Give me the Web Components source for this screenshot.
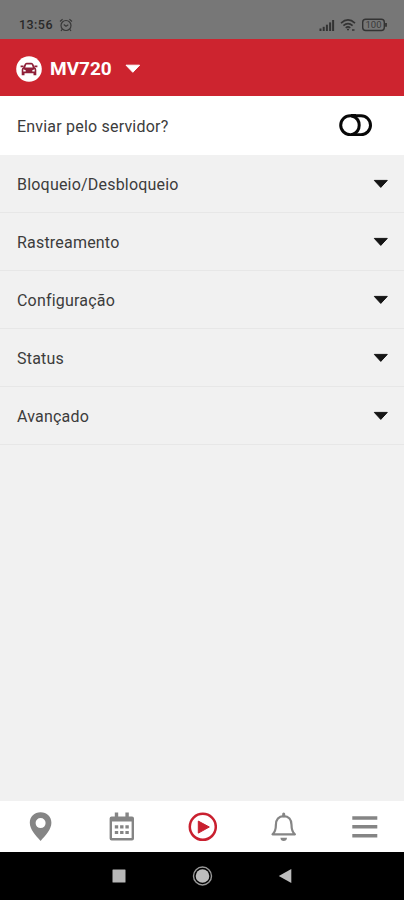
<!DOCTYPE html>
<html lang="pt-BR">
<head>
<meta charset="UTF-8">
<meta name="viewport" content="width=device-width, initial-scale=1.0">
<title>MV720</title>
<style>
    body {
        margin: 0;
        font-family: Roboto, "Liberation Sans", sans-serif;
    }
</style>
</head>
<body>
<command-screen></command-screen>
<script>
class StatusBar extends HTMLElement {
    constructor() {
        super();
        this.attachShadow({ mode: 'open' });
        this.render();
    }

    render() {
        this.shadowRoot.innerHTML = `
            <style>
                :host {
                    display: flex;
                    align-items: center;
                    box-sizing: border-box;
                    height: 39px;
                    padding: 10px 16px 0 19px;
                    background: #777;
                    color: #292929;
                }
                .time {
                    font-size: 12.5px;
                    font-weight: 500;
                    letter-spacing: 0.45px;
                    width: 40px;
                }
                .system {
                    margin-left: auto;
                }
                svg {
                    display: block;
                }
            </style>
            <span class="time">13:56</span>
            <svg width="14" height="14" viewBox="0 0 14 14" fill="none" stroke="#383838" stroke-width="1.2">
                <circle cx="7" cy="7.5" r="5"/>
                <path d="M1 3.5 3.6 1.2M13 3.5 10.4 1.2M3.4 11.2 2 13M10.6 11.2 12 13M4.8 6.5 7 8.2 9.3 6.8"/>
            </svg>
            <svg class="system" width="69" height="14" viewBox="0 0 69 14">
                <g fill="#333">
                    <rect x="0.5" y="10.5" width="2" height="2.5"/>
                    <rect x="3.7" y="8.8" width="2" height="4.2"/>
                    <rect x="6.9" y="6.7" width="2" height="6.3"/>
                    <rect x="10.1" y="4.4" width="2" height="8.6"/>
                    <rect x="13.1" y="2" width="2" height="11"/>
                </g>
                <g fill="none" stroke="#333" stroke-width="1.6">
                    <path d="M22 5.1Q29 -1.3 36 5.1M24.4 7.6Q29 3.5 33.6 7.6M26.7 9.8Q29 8 31.3 9.8"/>
                    <path d="M28 11.5h2M33 12h2.5" stroke-width="1.7"/>
                    <rect x="43.7" y="1.3" width="21.6" height="11.2" rx="3" stroke-width="1.4"/>
                    <path d="M67 5.1v3.6" stroke-width="1.8"/>
                </g>
                <text x="54.5" y="10.4" text-anchor="middle" font-size="9.5" fill="#3a3a3a">100</text>
            </svg>
        `;
    }
}

class DeviceHeader extends HTMLElement {
    constructor() {
        super();
        this.attachShadow({ mode: 'open' });
        this.render();
    }

    render() {
        this.shadowRoot.innerHTML = `
            <style>
                :host {
                    display: flex;
                    align-items: center;
                    box-sizing: border-box;
                    height: 57px;
                    padding: 2px 16px 0;
                    background: #cd242f;
                    color: #fff;
                    font-size: 19px;
                    font-weight: 700;
                }
                .name {
                    margin: 0 12px 0 8px;
                }
            </style>
            <svg width="26" height="26" viewBox="0 0 26 26">
                <circle cx="13" cy="13" r="12.8" fill="#fff"/>
                <path d="M5.7 19.3v-5.6q0-1.5 1.6-2.4l1.3-3Q9.2 6.8 10.6 6.8h4.8q1.4 0 2 1.5l1.3 3q1.6.9 1.6 2.4v5.6h-2.8v-2H8.5v2z" fill="#8f2039"/>
                <path d="M4.6 9.6h3v1.7h-3zM18.4 9.6h3v1.7h-3z" fill="#8f2039"/>
                <path d="M9.2 11.4 10.3 8.6h5.4l1.1 2.8z" fill="#fff"/>
                <path d="M7.3 13.2 9.7 14.3V15.6H7.3zM18.7 13.2 16.3 14.3V15.6h2.4z" fill="#fff"/>
            </svg>
            <span class="name"><slot></slot></span>
            <svg width="18" height="10" viewBox="0 0 18 10">
                <path d="M2 1.2h13.6L8.8 8.3z" fill="#fff" stroke="#fff" stroke-linejoin="round"/>
            </svg>
        `;
    }
}

class ServerToggle extends HTMLElement {
    constructor() {
        super();
        this.attachShadow({ mode: 'open' });
        this.render();
    }

    render() {
        this.shadowRoot.innerHTML = `
            <style>
                :host {
                    display: flex;
                    align-items: center;
                    justify-content: space-between;
                    box-sizing: border-box;
                    height: 59px;
                    padding: 0 32px 1px 17px;
                    background: #fff;
                    color: #3c3c3c;
                    font-size: 16px;
                    letter-spacing: var(--label-spacing);
                }
                .label {
                    padding-top: 3px;
                }
            </style>
            <span class="label"><slot></slot></span>
            <svg width="33" height="22" viewBox="0 0 33 22" fill="none" stroke="#080808" stroke-width="3">
                <rect x="1.7" y="1.7" width="29.8" height="19" rx="9.5"/>
                <path d="M13.5 2Q20.2 4.7 20.2 11.2T13.5 20.4"/>
                <path d="M12 1.7h5M12 20.7h5" stroke-width="3.4"/>
            </svg>
        `;
    }
}

class CommandGroup extends HTMLElement {
    constructor() {
        super();
        this.attachShadow({ mode: 'open' });
        this.render();
    }

    render() {
        this.shadowRoot.innerHTML = `
            <style>
                :host {
                    display: flex;
                    align-items: center;
                    justify-content: space-between;
                    box-sizing: border-box;
                    height: 58px;
                    padding: 2px 15px 0 17px;
                    border-bottom: 1px solid #e7e7e7;
                    color: #3c3c3c;
                    font-size: 16px;
                    letter-spacing: var(--label-spacing);
                }
                svg {
                    margin-bottom: 2px;
                }
            </style>
            <span><slot></slot></span>
            <svg width="16" height="10" viewBox="0 0 16 10">
                <path d="M1.3 1.4h13L7.8 8.4z" fill="#151515" stroke="#151515" stroke-linejoin="round"/>
            </svg>
        `;
    }
}

class TabBar extends HTMLElement {
    constructor() {
        super();
        this.attachShadow({ mode: 'open' });
        this.render();
    }

    render() {
        this.shadowRoot.innerHTML = `
            <style>
                :host {
                    display: grid;
                    grid-template-columns: repeat(5, 1fr);
                    place-items: center;
                    height: 51px;
                    background: #fff;
                }
                svg {
                    display: block;
                }
            </style>
            <svg width="30" height="30" viewBox="-0.6 0.5 30 30">
                <path d="M15 .8C8.7.8 4.2 5.2 4.2 11.2 4.2 17.8 10 23.6 15 29.5 20 23.6 25.8 17.8 25.8 11.2 25.8 5.2 21.3.8 15 .8zm0 5.8a5 5 0 1 1 0 10 5 5 0 0 1 0-10z" fill="#858585" fill-rule="evenodd"/>
            </svg>
            <svg width="30" height="30" viewBox="-0.8 0.5 30 30" fill="#858585">
                <path d="M8 1h3.4v4h7.2V1H22v4h3.2q2 0 2 2v20q0 2-2 2H4.8q-2 0-2-2V7q0-2 2-2H8zM5.2 10v16.5h19.6V10z" fill-rule="evenodd"/>
                <path d="M8 13.8h3.4v3.2H8zM13.3 13.8h3.4v3.2h-3.4zM18.6 13.8H22v3.2h-3.4zM8 19.4h3.4v3.2H8zM13.3 19.4h3.4v3.2h-3.4zM18.6 19.4H22v3.2h-3.4z"/>
            </svg>
            <svg width="30" height="30" viewBox="0 0 30 30">
                <circle cx="15.8" cy="14.8" r="13" fill="none" stroke="#c9202f" stroke-width="2.5"/>
                <path d="M11.3 9.1 22.3 15 11.3 21.1z" fill="#c9202f" stroke="#c9202f" stroke-linejoin="round"/>
            </svg>
            <svg width="30" height="30" viewBox="-0.7 0 30 30" fill="none" stroke="#858585" stroke-width="2.2">
                <path d="M3.8 22.3C6.6 20 7.2 17.5 7.2 12.8 7.2 7.5 10 4.2 15 4.2S22.8 7.5 22.8 12.8C22.8 17.5 23.4 20 26.2 22.3z" stroke-linejoin="round"/>
                <path d="M15 2v2" stroke-width="3" stroke-linecap="round"/>
                <path d="M11.7 25.8h6.6Q18 29 15 29T11.7 25.8z" fill="#858585" stroke="none"/>
            </svg>
            <svg width="30" height="30" viewBox="0 0 30 30" fill="#858585">
                <path d="M3.3 4.2h25v3.5h-25zM3.3 13.1h25v3.5h-25zM3.3 22.1h25v3.5h-25z"/>
            </svg>
        `;
    }
}

class SystemNav extends HTMLElement {
    constructor() {
        super();
        this.attachShadow({ mode: 'open' });
        this.render();
    }

    render() {
        this.shadowRoot.innerHTML = `
            <style>
                :host {
                    display: flex;
                    justify-content: center;
                    align-items: center;
                    gap: 61px;
                    height: 48px;
                    background: #000;
                }
            </style>
            <svg width="22" height="22" viewBox="0 0 22 22">
                <rect x="4.5" y="4.5" width="13" height="13" rx="0.5" fill="#b8b8b8"/>
            </svg>
            <svg width="22" height="22" viewBox="0 0 22 22">
                <circle cx="11.5" cy="11" r="9" fill="none" stroke="#999" stroke-width="1.4"/>
                <circle cx="11.5" cy="11" r="6.8" fill="#bdbdbd"/>
            </svg>
            <svg width="22" height="22" viewBox="0 0 22 22">
                <path d="M4.8 11 17.3 4V18z" fill="#bdbdbd"/>
            </svg>
        `;
    }
}

class CommandScreen extends HTMLElement {
    constructor() {
        super();
        this.attachShadow({ mode: 'open' });
        this.render();
    }

    render() {
        this.shadowRoot.innerHTML = `
            <style>
                :host {
                    --label-spacing: 0.2px;
                    display: flex;
                    flex-direction: column;
                    height: 100vh;
                    background: #f1f1f1;
                }
                main {
                    flex: 1;
                }
            </style>
            <status-bar></status-bar>
            <device-header>MV720</device-header>
            <main>
                <server-toggle>Enviar pelo servidor?</server-toggle>
                <command-group>Bloqueio/Desbloqueio</command-group>
                <command-group>Rastreamento</command-group>
                <command-group>Configuração</command-group>
                <command-group>Status</command-group>
                <command-group>Avançado</command-group>
            </main>
            <tab-bar></tab-bar>
            <system-nav></system-nav>
        `;
    }
}

customElements.define('status-bar', StatusBar);
customElements.define('device-header', DeviceHeader);
customElements.define('server-toggle', ServerToggle);
customElements.define('command-group', CommandGroup);
customElements.define('tab-bar', TabBar);
customElements.define('system-nav', SystemNav);
customElements.define('command-screen', CommandScreen);
</script>
</body>
</html>
